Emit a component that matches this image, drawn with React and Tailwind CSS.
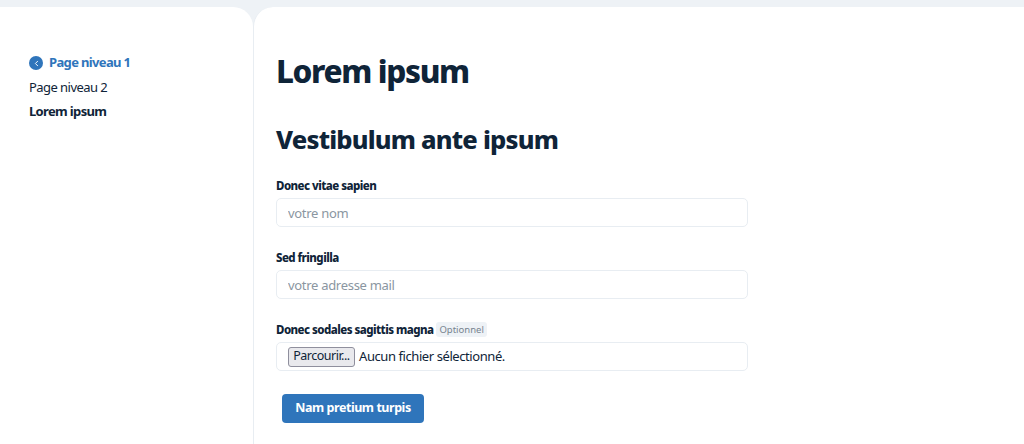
import { ChevronLeft } from 'lucide-react';

const font = "font-['Noto_Sans',sans-serif]";
const fieldClass = 'h-[29px] w-[472px] rounded-[5px] border border-[#e8edf2] bg-white px-[11px] text-[13px] tracking-[-0.3px] text-[#0f2438] outline-none placeholder:text-[#8a96a1]';
const labelClass = 'block h-[17px] text-[11.5px] leading-[17px] font-extrabold tracking-[-0.55px] text-[#0f2438]';

export default function App() {
  return (
    <div className={`${font} h-[444px] w-[1024px] overflow-hidden bg-[#eef2f6] pt-[7px]`}>
      <div className="flex h-[437px]">
        <aside className="w-[253px] shrink-0 rounded-tr-[20px] bg-white pt-[46px] pl-[29px]">
          <a className="flex h-[20px] items-center gap-[6px] text-[13px] font-bold tracking-[-0.65px] text-[#2f75bb]">
            <span className="flex h-[14px] w-[14px] items-center justify-center rounded-full bg-[#2f75bb]">
              <ChevronLeft size={9} strokeWidth={2.5} className="text-white" />
            </span>
            Page niveau 1
          </a>
          <a className="mt-[4px] block h-[20px] text-[13px] leading-[20px] tracking-[-0.55px] text-[#0f2438]">Page niveau 2</a>
          <a className="mt-[4px] block h-[20px] text-[13px] leading-[20px] font-bold tracking-[-0.65px] text-[#0f2438]">Lorem ipsum</a>
        </aside>

        <main className="flex-1 rounded-tl-[20px] border-l border-[#e8edf2] bg-white pl-[22px]">
          <h1 className="mt-[40px] h-[47px] text-[31.5px] leading-[47px] font-extrabold tracking-[-1.35px] text-[#0f2438]">Lorem ipsum</h1>
          <h2 className="mt-[26px] h-[38px] text-[25.5px] leading-[38px] font-extrabold tracking-[-0.8px] text-[#0f2438]">Vestibulum ante ipsum</h2>

          <form>
            <label className={`${labelClass} mt-[19px]`}>Donec vitae sapien</label>
            <input className={`${fieldClass} mt-[4px] block`} placeholder="votre nom" />

            <label className={`${labelClass} mt-[22px]`}>Sed fringilla</label>
            <input className={`${fieldClass} mt-[4px] block`} placeholder="votre adresse mail" />

            <div className="mt-[22px] flex h-[17px] items-center gap-[3px]">
              <label className={labelClass}>Donec sodales sagittis magna</label>
              <span className="rounded-[3px] bg-[#eef2f6] px-[3px] text-[9.5px] leading-[15px] text-[#76838f]">Optionnel</span>
            </div>
            <div className={`${fieldClass} mt-[4px] flex items-center gap-[4px]`}>
              <button type="button" className="h-[20px] w-[67px] rounded-[3px] border border-[#8f8f9d] bg-[#e9e9ed] text-[12.5px] leading-none tracking-[-0.5px] text-[#0f2438]">Parcourir...</button>
              <span className="tracking-[-0.42px]">Aucun fichier sélectionné.</span>
            </div>

            <button type="button" className="mt-[23px] ml-[6px] h-[29px] w-[142px] rounded-[4px] bg-[#2f75bb] text-[12.5px] font-bold tracking-[-0.45px] text-white">Nam pretium turpis</button>
          </form>
        </main>
      </div>
    </div>
  );
}
